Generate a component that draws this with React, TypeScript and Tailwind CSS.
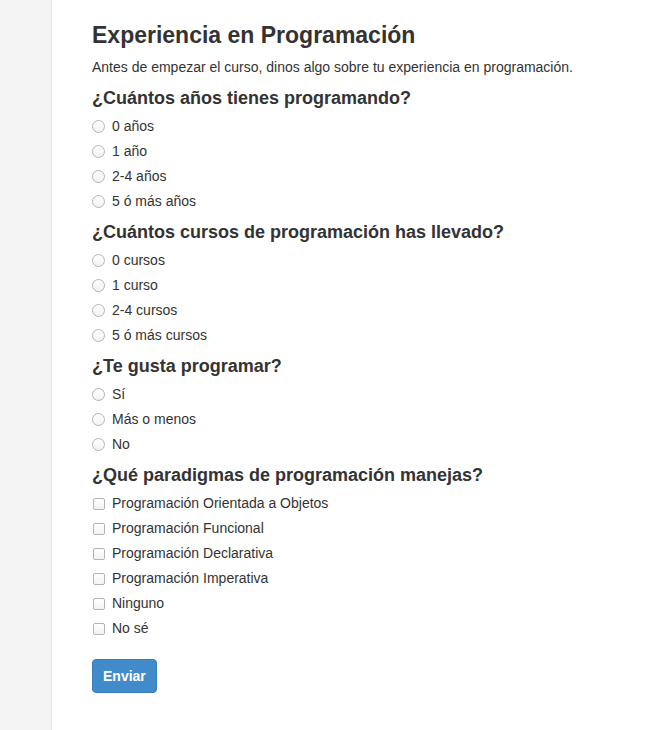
const questions = [
  {
    title: "¿Cuántos años tienes programando?",
    type: "radio",
    options: ["0 años", "1 año", "2-4 años", "5 ó más años"],
  },
  {
    title: "¿Cuántos cursos de programación has llevado?",
    type: "radio",
    options: ["0 cursos", "1 curso", "2-4 cursos", "5 ó más cursos"],
  },
  {
    title: "¿Te gusta programar?",
    type: "radio",
    options: ["Sí", "Más o menos", "No"],
  },
  {
    title: "¿Qué paradigmas de programación manejas?",
    type: "checkbox",
    options: [
      "Programación Orientada a Objetos",
      "Programación Funcional",
      "Programación Declarativa",
      "Programación Imperativa",
      "Ninguno",
      "No sé",
    ],
  },
];

export default function App() {
  return (
    <div className="flex min-h-screen bg-white font-['Liberation_Sans',Arial,sans-serif] text-[#333]">
      <div className="w-[52px] shrink-0 border-r border-[#e6e6e6] bg-[#f4f4f4]" />
      <div className="flex-1 pl-[40px] pt-[22px]">
        <h1 className="text-[23px] leading-[26px] font-semibold">Experiencia en Programación</h1>
        <p className="mt-[9px] text-[14px] leading-[20px]">
          Antes de empezar el curso, dinos algo sobre tu experiencia en programación.
        </p>
        {questions.map((q, i) => (
          <div key={i} className={i === 0 ? "mt-[11px]" : "mt-[8px]"}>
            <h4 className="text-[18px] leading-[20px] font-semibold">{q.title}</h4>
            <div className="mt-[6px]">
              {q.options.map((opt) => (
                <label key={opt} className="flex h-[25px] items-center text-[14px]">
                  <span
                    className={
                      q.type === "radio"
                        ? "h-[13px] w-[13px] rounded-full border border-[#b4b4b4] bg-gradient-to-b from-white to-[#f2f2f2]"
                        : "ml-[1px] h-[12px] w-[12px] rounded-[2px] border border-[#b4b4b4] bg-gradient-to-b from-white to-[#f2f2f2]"
                    }
                  />
                  <span className={q.type === "radio" ? "ml-[7px]" : "ml-[7px]"}>{opt}</span>
                </label>
              ))}
            </div>
          </div>
        ))}
        <button className="mt-[18px] rounded-[4px] border border-[#357ebd] bg-[#428bca] px-[10px] py-[6px] text-[14px] leading-[20px] font-bold text-white">
          Enviar
        </button>
      </div>
    </div>
  );
}
